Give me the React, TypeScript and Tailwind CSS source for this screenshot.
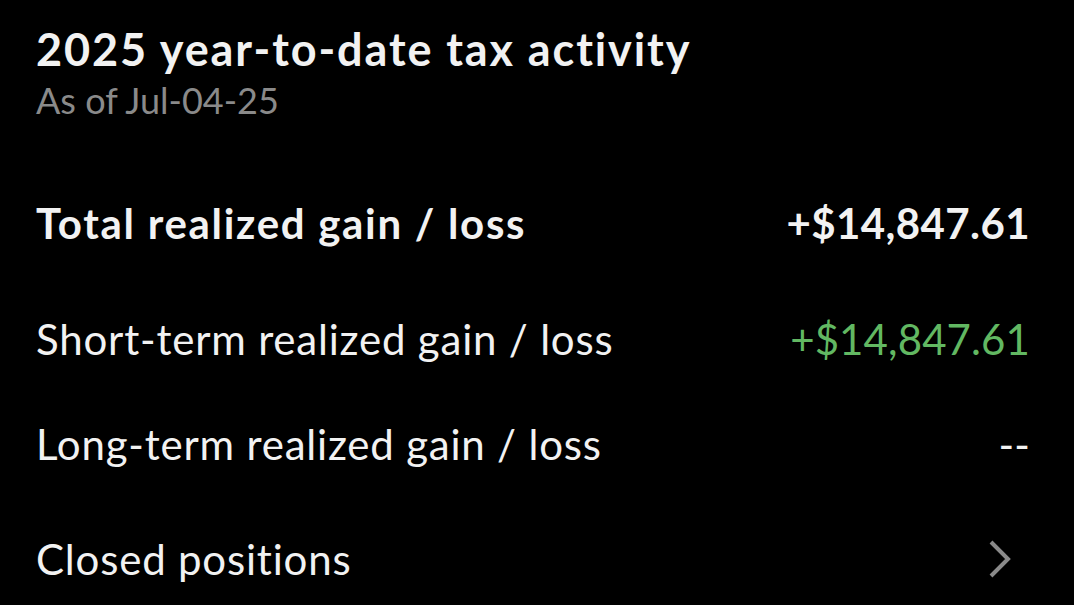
import React from "react";

function Row({ label, value, bold, valueClass, h }: { label: string; value: React.ReactNode; bold?: boolean; valueClass?: string; h: string }) {
  return (
    <div className={`flex items-center justify-between ${h}`}>
      <span className={`${bold ? "font-bold tracking-[1.7px]" : "font-normal tracking-[0.8px]"} text-[42px] leading-none text-[#f2f2f2]`}>{label}</span>
      <span className={`${bold ? "font-bold tracking-[0.4px]" : "font-normal tracking-[0.1px]"} text-[42px] leading-none ${valueClass ?? "text-[#f2f2f2]"}`}>{value}</span>
    </div>
  );
}

export default function App() {
  return (
    <div className="w-[1074px] h-[605px] bg-black overflow-hidden pl-[36px] pr-[44px]" style={{ fontFamily: "Lato, 'Open Sans', sans-serif" }}>
      <div className="pt-[25px]">
        <h1 className="text-[45px] font-bold leading-[48px] tracking-[1.9px] text-[#f2f2f2]">2025 year-to-date tax activity</h1>
        <p className="text-[36px] leading-[36px] font-normal text-[#8a8a8a] mt-[9px]">As of Jul-04-25</p>
      </div>
      <div className="mt-[80px]">
        <Row label="Total realized gain / loss" value="+$14,847.61" bold h="h-[50px]" />
        <div className="h-[66px]" />
        <Row label="Short-term realized gain / loss" value="+$14,847.61" valueClass="text-[#62b862]" h="h-[50px]" />
        <div className="h-[55px]" />
        <Row label="Long-term realized gain / loss" value="--" h="h-[50px]" />
        <div className="h-[65px]" />
        <div className="flex items-center justify-between h-[50px]">
          <span className="text-[42px] leading-none tracking-[0.8px] text-[#f2f2f2]">Closed positions</span>
          <svg width="24" height="38" viewBox="0 0 24 38" className="mr-[18px]">
            <path d="M3 2 L20 19 L3 36" fill="none" stroke="#8a8a8a" strokeWidth="4" />
          </svg>
        </div>
      </div>
    </div>
  );
}
